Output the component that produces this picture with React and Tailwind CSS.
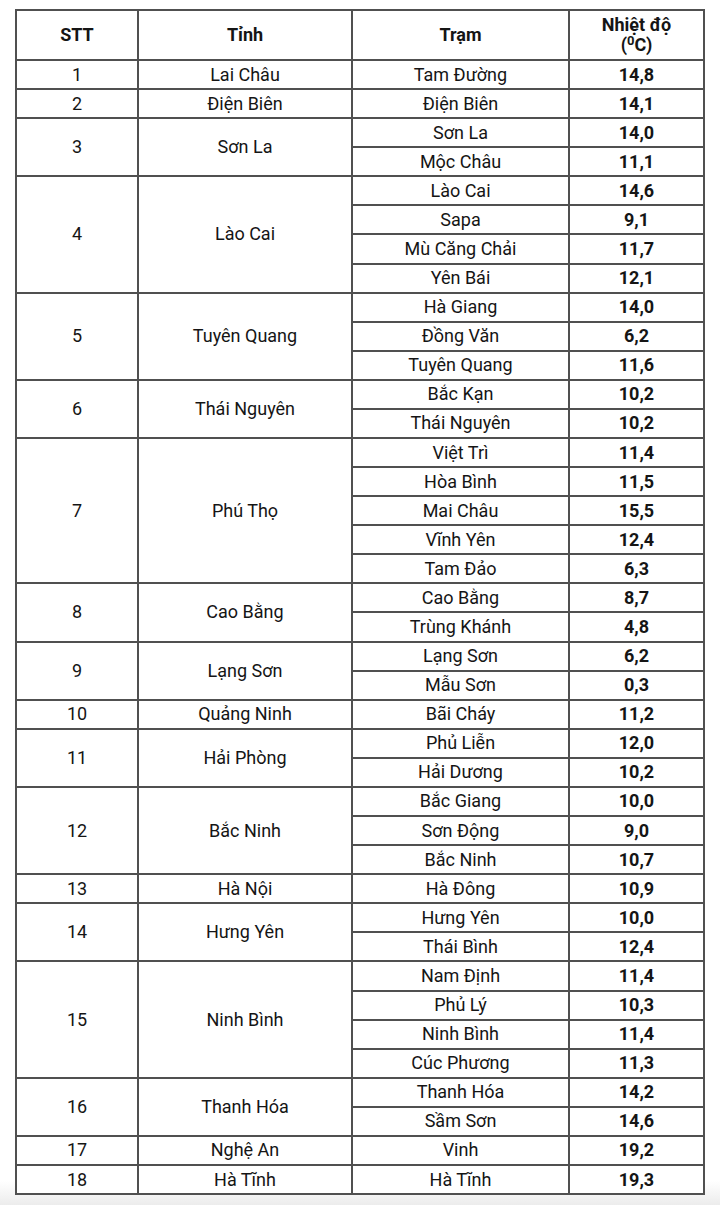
const data = [
  { no: 1, province: "Lai Châu", stations: [["Tam Đường", "14,8"]] },
  { no: 2, province: "Điện Biên", stations: [["Điện Biên", "14,1"]] },
  { no: 3, province: "Sơn La", stations: [["Sơn La", "14,0"], ["Mộc Châu", "11,1"]] },
  {
    no: 4,
    province: "Lào Cai",
    stations: [["Lào Cai", "14,6"], ["Sapa", "9,1"], ["Mù Căng Chải", "11,7"], ["Yên Bái", "12,1"]],
  },
  {
    no: 5,
    province: "Tuyên Quang",
    stations: [["Hà Giang", "14,0"], ["Đồng Văn", "6,2"], ["Tuyên Quang", "11,6"]],
  },
  { no: 6, province: "Thái Nguyên", stations: [["Bắc Kạn", "10,2"], ["Thái Nguyên", "10,2"]] },
  {
    no: 7,
    province: "Phú Thọ",
    stations: [
      ["Việt Trì", "11,4"],
      ["Hòa Bình", "11,5"],
      ["Mai Châu", "15,5"],
      ["Vĩnh Yên", "12,4"],
      ["Tam Đảo", "6,3"],
    ],
  },
  { no: 8, province: "Cao Bằng", stations: [["Cao Bằng", "8,7"], ["Trùng Khánh", "4,8"]] },
  { no: 9, province: "Lạng Sơn", stations: [["Lạng Sơn", "6,2"], ["Mẫu Sơn", "0,3"]] },
  { no: 10, province: "Quảng Ninh", stations: [["Bãi Cháy", "11,2"]] },
  { no: 11, province: "Hải Phòng", stations: [["Phủ Liễn", "12,0"], ["Hải Dương", "10,2"]] },
  {
    no: 12,
    province: "Bắc Ninh",
    stations: [["Bắc Giang", "10,0"], ["Sơn Động", "9,0"], ["Bắc Ninh", "10,7"]],
  },
  { no: 13, province: "Hà Nội", stations: [["Hà Đông", "10,9"]] },
  { no: 14, province: "Hưng Yên", stations: [["Hưng Yên", "10,0"], ["Thái Bình", "12,4"]] },
  {
    no: 15,
    province: "Ninh Bình",
    stations: [["Nam Định", "11,4"], ["Phủ Lý", "10,3"], ["Ninh Bình", "11,4"], ["Cúc Phương", "11,3"]],
  },
  { no: 16, province: "Thanh Hóa", stations: [["Thanh Hóa", "14,2"], ["Sầm Sơn", "14,6"]] },
  { no: 17, province: "Nghệ An", stations: [["Vinh", "19,2"]] },
  { no: 18, province: "Hà Tĩnh", stations: [["Hà Tĩnh", "19,3"]] },
];

const cell = "border-2 border-[#505050] text-center align-middle p-0";

export default function App() {
  return (
    <div
      className="min-h-[1205px] w-[720px] bg-linear-to-b from-white from-[98%] to-[#ececec] pt-[9px] pl-[15px] text-[18px] text-[#151515]"
      style={{ fontFamily: "Roboto, 'Noto Sans', sans-serif" }}
    >
      <table className="w-[688px] table-fixed border-collapse bg-white leading-[20px]">
        <colgroup>
          <col className="w-[122px]" />
          <col className="w-[214px]" />
          <col className="w-[217px]" />
          <col className="w-[135px]" />
        </colgroup>
        <thead>
          <tr className="h-[50px] font-bold">
            <th className={cell}>STT</th>
            <th className={cell}>Tỉnh</th>
            <th className={cell}>Trạm</th>
            <th className={cell}>
              Nhiệt độ
              <br />
              (<sup className="text-[13px] -top-[6px]">0</sup>C)
            </th>
          </tr>
        </thead>
        <tbody>
          {data.map((p) =>
            p.stations.map(([station, temp], i) => (
              <tr key={`${p.no}-${i}`} className="h-[29.08px]">
                {i === 0 && (
                  <>
                    <td rowSpan={p.stations.length} className={cell}>
                      {p.no}
                    </td>
                    <td rowSpan={p.stations.length} className={cell}>
                      {p.province}
                    </td>
                  </>
                )}
                <td className={cell}>{station}</td>
                <td className={`${cell} font-bold`}>{temp}</td>
              </tr>
            ))
          )}
        </tbody>
      </table>
    </div>
  );
}
